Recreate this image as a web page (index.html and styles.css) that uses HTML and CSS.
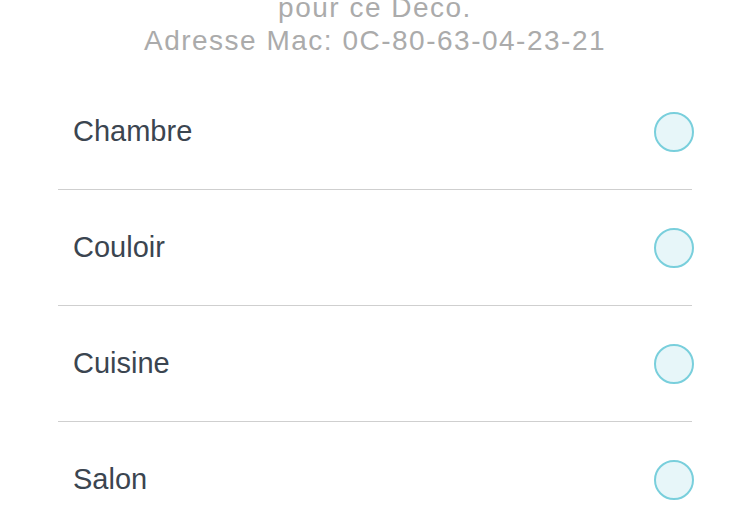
FILE: index.html
```html
<!DOCTYPE html>
<html lang="fr">
<head>
<meta charset="utf-8">
<link rel="stylesheet" href="styles.css">
</head>
<body>
<div class="screen">
  <div class="intro">
    <p class="line">pour ce Deco.</p>
    <p class="line">Adresse Mac: 0C-80-63-04-23-21</p>
  </div>
  <ul class="rooms">
    <li class="room"><span class="name">Chambre</span><span class="radio"></span></li>
    <li class="room"><span class="name">Couloir</span><span class="radio"></span></li>
    <li class="room"><span class="name">Cuisine</span><span class="radio"></span></li>
    <li class="room"><span class="name">Salon</span><span class="radio"></span></li>
  </ul>
</div>
</body>
</html>
```
FILE: styles.css
```css
html, body {
  margin: 0;
  padding: 0;
  background: #ffffff;
}
body {
  width: 750px;
  height: 525px;
  overflow: hidden;
  font-family: "Liberation Sans", Arial, sans-serif;
}
.screen {
  display: flex;
  flex-direction: column;
}
.intro {
  margin-top: -9px;
  text-align: center;
  color: #ababab;
  font-size: 28px;
  line-height: 33px;
  letter-spacing: 1.5px;
}
.line {
  margin: 0;
}
.rooms {
  list-style: none;
  margin: 17px 58px 0 58px;
  padding: 0;
}
.room {
  height: 115px;
  border-bottom: 1px solid #cfcfcf;
  display: flex;
  align-items: center;
  justify-content: space-between;
  padding-left: 15px;
}
.name {
  font-size: 29px;
  color: #3b4550;
}
.radio {
  width: 36px;
  height: 36px;
  border-radius: 50%;
  border: 2px solid #79cfdc;
  background: #e7f6f9;
  margin-right: -2px;
}
```
